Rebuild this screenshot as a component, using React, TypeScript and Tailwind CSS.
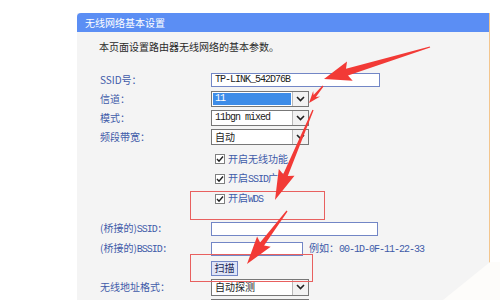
import type { ReactNode } from 'react'

const cjk = "font-['SimSun','Noto_Sans_CJK_SC',sans-serif]"
const mono = "font-['Liberation_Mono',monospace] text-[10px] tracking-[-1px]"

type Pt = [number, number]

// tapered annotation arrow: thin tail, widening shaft, wide head
function arrowPoints(tail: Pt, tip: Pt, shaft: number, head: number, headLen: number) {
  const dx = tip[0] - tail[0]
  const dy = tip[1] - tail[1]
  const len = Math.hypot(dx, dy)
  const ux = dx / len
  const uy = dy / len
  const nx = -uy
  const ny = ux
  const bx = tip[0] - ux * headLen
  const by = tip[1] - uy * headLen
  const pts: Pt[] = [
    [tail[0] + nx * 0.6, tail[1] + ny * 0.6],
    [bx + nx * shaft / 2, by + ny * shaft / 2],
    [bx - ux * 3 + nx * head / 2, by - uy * 3 + ny * head / 2],
    tip,
    [bx - ux * 3 - nx * head / 2, by - uy * 3 - ny * head / 2],
    [bx - nx * shaft / 2, by - ny * shaft / 2],
    [tail[0] - nx * 0.6, tail[1] - ny * 0.6],
  ]
  return pts.map((p) => `${p[0].toFixed(1)},${p[1].toFixed(1)}`).join(' ')
}

function Row({ label, h, children }: { label?: ReactNode; h: string; children?: ReactNode }) {
  return (
    <div className={`flex items-center ${h}`}>
      <div className="w-[111px] shrink-0 text-[#3f5ba9]">{label}</div>
      <div className="flex items-center">{children}</div>
    </div>
  )
}

function Chevron() {
  return (
    <svg width="9" height="6" viewBox="0 0 9 6">
      <polyline points="1,1 4.5,4.5 8,1" fill="none" stroke="#222" strokeWidth="1.6" />
    </svg>
  )
}

function Select({ children, selected }: { children: ReactNode; selected?: boolean }) {
  return (
    <div className="flex h-[16px] w-[98px] border border-[#777] bg-white">
      <div className="flex-1 p-px">
        <div
          className={`flex h-full items-center pl-[2px] ${selected ? 'bg-[#3d8ce8] text-white' : 'text-[#222]'}`}
        >
          {children}
        </div>
      </div>
      <div className="flex w-[16px] items-center justify-center border-l border-[#b9b9b9] bg-[#f2f2f2]">
        <Chevron />
      </div>
    </div>
  )
}

function Check({ children }: { children: ReactNode }) {
  return (
    <div className="ml-[4px] flex items-center gap-[3px] text-[#3f5ba9]">
      <div className="flex h-[10px] w-[10px] items-center justify-center border border-[#808080] bg-white">
        <svg width="8" height="8" viewBox="0 0 8 8">
          <polyline points="1,4 3,6.2 7,1.5" fill="none" stroke="#222" strokeWidth="1.4" />
        </svg>
      </div>
      <span>{children}</span>
    </div>
  )
}

function Input({ w, children }: { w: string; children?: ReactNode }) {
  return (
    <div className={`flex h-[14px] items-center border border-[#7286c6] bg-white pl-[3px] text-[#222] ${w}`}>
      {children}
    </div>
  )
}

export default function App() {
  return (
    <div className={`relative h-[300px] w-[500px] overflow-hidden bg-white text-[10px] leading-none ${cjk}`}>
      <div className="ml-[77px] mt-[13px] h-[300px] w-[413px] border-r border-[#f3c58d] bg-[#f4f4f4]">
        <div className="flex h-[19px] items-center rounded-tl-[4px] bg-[#5b8ef4] pl-[8px] text-white">
          无线网络基本设置
        </div>
        <div className="pl-[23px]">
          <div className="-ml-px flex h-[30px] items-center text-[#2a2a2a]">本页面设置路由器无线网络的基本参数。</div>
          <div className="mt-[8px]">
            <Row label="SSID号：" h="h-[19px]">
              <Input w="w-[169px]">
                <span className={mono}>TP-LINK_542D76B</span>
              </Input>
            </Row>
            <Row label="信道：" h="h-[19px]">
              <Select selected>
                <span className={mono}>11</span>
              </Select>
            </Row>
            <Row label="模式：" h="h-[19px]">
              <Select>
                <span className={mono}>11bgn mixed</span>
              </Select>
            </Row>
            <Row label="频段带宽：" h="h-[19px]">
              <Select>自动</Select>
            </Row>
          </div>
          <div className="mt-[3px]">
            <Row h="h-[20px]">
              <Check>开启无线功能</Check>
            </Row>
            <Row h="h-[20px]">
              <Check>
                开启<span className={mono}>SSID</span>广播
              </Check>
            </Row>
            <Row h="h-[20px]">
              <Check>
                开启<span className={mono}>WDS</span>
              </Check>
            </Row>
          </div>
          <div className="mt-[10px]">
            <Row
              label={
                <>
                  (桥接的)<span className={mono}>SSID:</span>
                </>
              }
              h="h-[20px]"
            >
              <Input w="w-[167px]" />
            </Row>
            <Row
              label={
                <>
                  (桥接的)<span className={mono}>BSSID:</span>
                </>
              }
              h="h-[20px]"
            >
              <Input w="w-[92px]" />
              <span className="ml-[6px] text-[#3f5ba9]">
                例如：<span className={mono}>00-1D-0F-11-22-33</span>
              </span>
            </Row>
            <Row h="h-[18px]">
              <div className="flex h-[15px] w-[27px] items-center justify-center border border-[#7286c6] bg-[#dfe4f6] text-[#1c2a5a]">
                扫描
              </div>
            </Row>
            <Row label="无线地址格式：" h="h-[20px]">
              <div className="flex h-[17px] w-[98px] border border-[#777] bg-white">
                <div className="flex flex-1 items-center pl-[3px] text-[#222]">自动探测</div>
                <div className="flex w-[16px] items-center justify-center border-l border-[#b9b9b9] bg-[#f2f2f2]">
                  <Chevron />
                </div>
              </div>
            </Row>
            <Row h="h-[20px]">
              <div className="h-[17px] w-[98px] border border-[#777] bg-white" />
            </Row>
          </div>
        </div>
      </div>

      {/* annotation boxes */}
      <div className="absolute left-[190px] top-[191px] h-[29px] w-[135px] border border-[#e8605f]" />
      <div className="absolute left-[190px] top-[254px] h-[28px] w-[123px] border border-[#e8605f]" />

      <svg className="pointer-events-none absolute inset-0" width="500" height="300">
        <polygon points="443,300 490,262 500,262 500,300" fill="#fdfcfa" />
        <g fill="#f23a36">
          <polygon points={arrowPoints([430, 47], [324, 79], 7, 20, 24)} />
          <polygon points={arrowPoints([323, 86], [309, 103], 3, 9, 9)} />
          <polygon points={arrowPoints([313, 110], [275, 200], 5, 17, 27)} />
          <polygon points={arrowPoints([287, 211], [247, 264], 5, 17, 25)} />
        </g>
      </svg>
    </div>
  )
}
